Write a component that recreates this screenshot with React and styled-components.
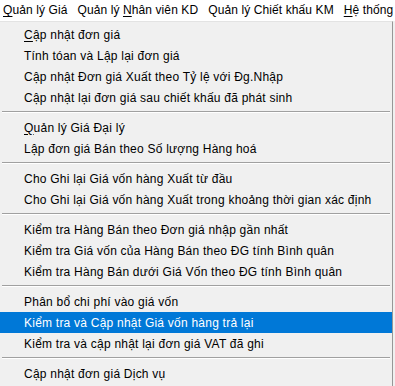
import React from "react";
import styled, { createGlobalStyle } from "styled-components";

const Global = createGlobalStyle`
  html, body { margin: 0; padding: 0; background: #f0f0f0; }
  body { width: 395px; height: 386px; overflow: hidden; font-family: "Liberation Sans", Arial, sans-serif; font-size: 12px; color: #000; }
`;

const Screen = styled.div`
  width: 395px;
  height: 386px;
  display: flex;
  flex-direction: column;
  background: #f0f0f0;
`;

const MenuBar = styled.div`
  height: 21px;
  background: #fff;
  display: flex;
  align-items: center;
  padding-left: 3px;
  gap: 10px;
  white-space: nowrap;
  letter-spacing: 0.1px;
`;

const BarItem = styled.span`
  padding: 0 0 1px 0;
`;

const Dropdown = styled.div`
  width: 392px;
  flex: 1;
  display: flex;
  flex-direction: column;
  padding-top: 2px;
  border-right: 1px solid #979797;
  border-top: 1px solid #e3e3e3;
  letter-spacing: 0.23px;
`;

const Item = styled.div`
  height: 21px;
  display: flex;
  align-items: center;
  padding-left: 24px;
  white-space: nowrap;
  background: ${(p) => (p.$active ? "#0078d7" : "transparent")};
  color: ${(p) => (p.$active ? "#fff" : "#000")};
`;

const Separator = styled.div`
  height: 9px;
  display: flex;
  flex-direction: column;
  justify-content: flex-start;
  padding: 3px 2px 0 2px;
  box-sizing: border-box;
  &::before {
    content: "";
    display: block;
    height: 1px;
    background: #a0a0a0;
  }
  &::after {
    content: "";
    display: block;
    height: 1px;
    background: #fff;
  }
`;

const U = styled.span`
  text-decoration: underline;
  text-underline-offset: 2px;
`;

const groups = [
  [
    [<U key="u">C</U>, "ập nhật đơn giá"],
    ["Tính tóan và Lập lại đơn giá"],
    ["Cập nhật Đơn giá Xuất theo Tỷ lệ với Đg.Nhập"],
    ["Cập nhật lại đơn giá sau chiết khấu đã phát sinh"],
  ],
  [
    [<U key="u">Q</U>, "uản lý Giá Đại lý"],
    ["Lập đơn giá Bán theo Số lượng Hàng hoá"],
  ],
  [
    ["Cho Ghi lại Giá vốn hàng Xuất từ đầu"],
    ["Cho Ghi lại Giá vốn hàng Xuất trong khoảng thời gian xác định"],
  ],
  [
    ["Kiểm tra Hàng Bán theo Đơn giá nhập gần nhất"],
    ["Kiểm tra Giá vốn của Hàng Bán theo ĐG tính Bình quân"],
    ["Kiểm tra Hàng Bán dưới Giá Vốn theo ĐG tính Bình quân"],
  ],
  [
    ["Phân bổ chi phí vào giá vốn"],
    ["Kiểm tra và Cập nhật Giá vốn hàng trả lại", true],
    ["Kiểm tra và cập nhật lại đơn giá VAT đã ghi"],
  ],
  [["Cập nhật đơn giá Dịch vụ"]],
];

export default function App() {
  return (
    <Screen>
      <Global />
      <MenuBar>
        <BarItem><U>Q</U>uản lý Giá</BarItem>
        <BarItem>Quản lý <U>N</U>hân viên KD</BarItem>
        <BarItem>Quản lý Chiết khấu KM</BarItem>
        <BarItem><U>H</U>ệ thống</BarItem>
      </MenuBar>
      <Dropdown>
        {groups.map((g, gi) => (
          <React.Fragment key={gi}>
            {gi > 0 && <Separator />}
            {g.map((it, ii) => {
              const active = it[it.length - 1] === true;
              const content = active ? it.slice(0, -1) : it;
              return (
                <Item key={ii} $active={active}>
                  {content}
                </Item>
              );
            })}
          </React.Fragment>
        ))}
      </Dropdown>
    </Screen>
  );
}
